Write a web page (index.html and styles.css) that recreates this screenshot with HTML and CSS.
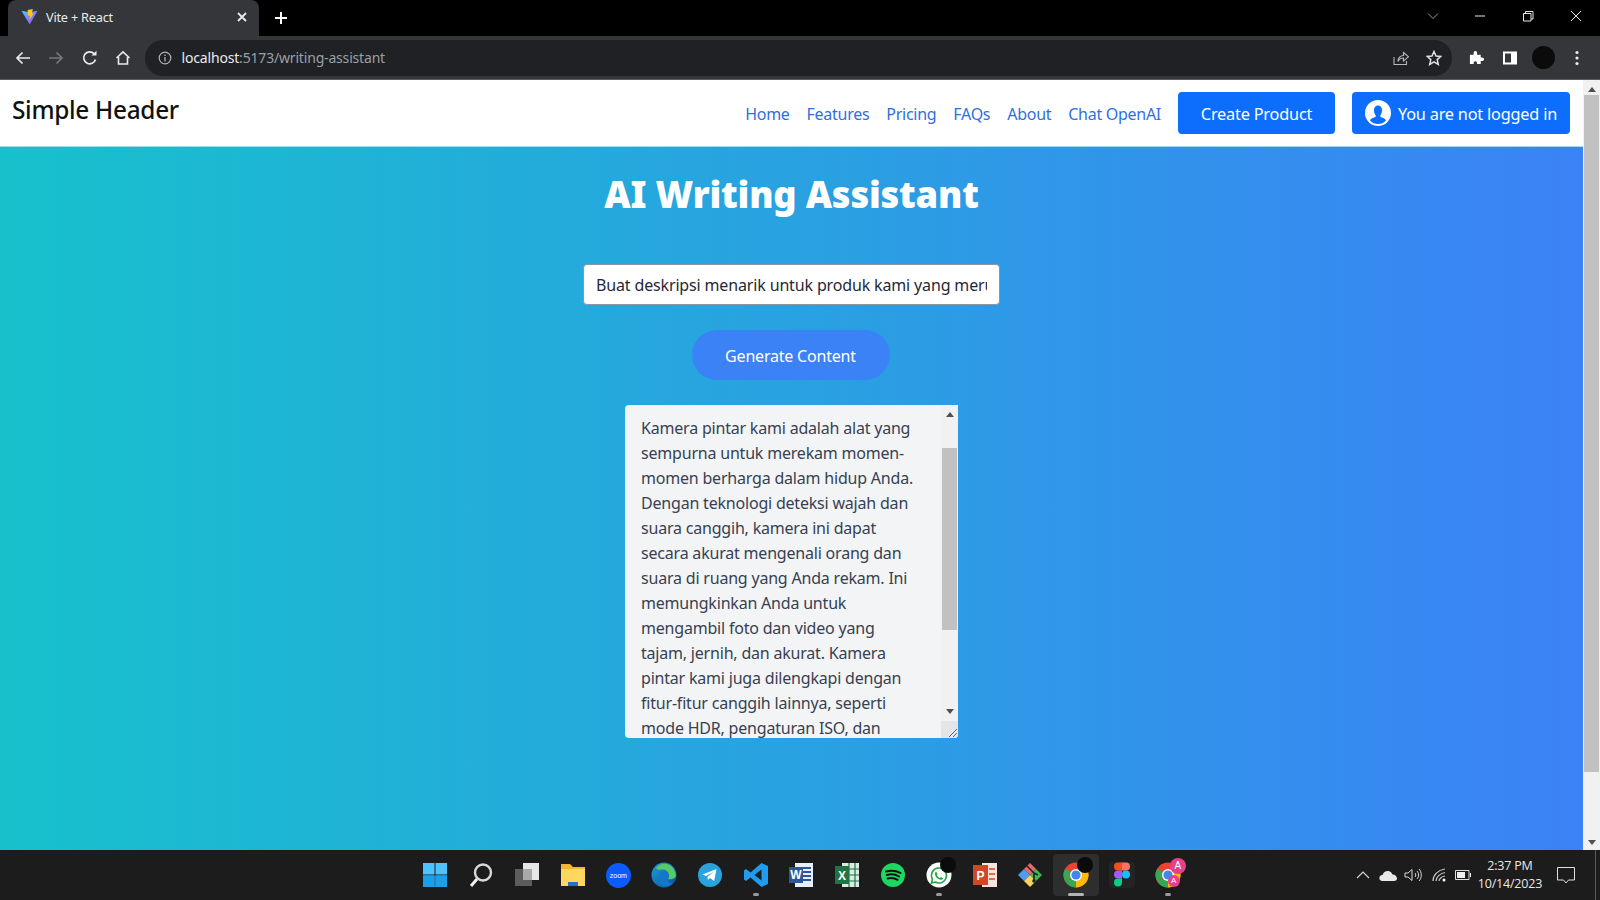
FILE: index.html
```html
<!DOCTYPE html>
<html lang="en">
<head>
<meta charset="utf-8">
<title>Vite + React</title>
<link rel="stylesheet" href="styles.css">
</head>
<body>
<div class="tabstrip">
  <div class="tab">
    <svg class="favicon" viewBox="0 0 18 18"><defs><linearGradient id="vg" x1="0" y1="0" x2="1" y2="1"><stop offset="0" stop-color="#41d1ff"/><stop offset="1" stop-color="#bd34fe"/></linearGradient></defs><path d="M0.5 2.5 L9 4 L17.5 2.5 L9.2 17 Z" fill="url(#vg)"/><path d="M12.5 0.5 L7 1.5 L7.5 8 L9.5 7.5 L9 12 L13.5 5 L11.5 5.5 Z" fill="#ffc517"/></svg>
    <span class="tab-title">Vite + React</span>
    <svg class="tab-close" viewBox="0 0 12 12"><path d="M2 2 L10 10 M10 2 L2 10" stroke="#e8eaed" stroke-width="1.8"/></svg>
  </div>
  <svg class="new-tab" viewBox="0 0 14 14"><path d="M7 1 V13 M1 7 H13" stroke="#fff" stroke-width="2"/></svg>
  <div class="win-controls">
    <svg class="win-chevron" viewBox="0 0 12 8"><path d="M1 1.5 L6 6.5 L11 1.5" fill="none" stroke="#9a9a9a" stroke-width="1"/></svg>
    <svg class="win-btn" viewBox="0 0 12 12"><path d="M1 6 H11" stroke="#e6e6e6" stroke-width="1"/></svg>
    <svg class="win-btn" viewBox="0 0 12 12"><path d="M1.5 3.5 H9 V11 H1.5 Z M3.5 3.5 V1.5 H11 V9 H9" fill="none" stroke="#e6e6e6" stroke-width="1"/></svg>
    <svg class="win-btn" viewBox="0 0 12 12"><path d="M1 1 L11 11 M11 1 L1 11" stroke="#e6e6e6" stroke-width="1"/></svg>
  </div>
</div>
<div class="toolbar">
  <svg class="tb-icon" viewBox="0 0 16 16"><path d="M15 8 H2 M7.5 2.5 L2 8 L7.5 13.5" fill="none" stroke="#e8eaed" stroke-width="1.7"/></svg>
  <svg class="tb-icon" viewBox="0 0 16 16"><path d="M1 8 H14 M8.5 2.5 L14 8 L8.5 13.5" fill="none" stroke="#75777a" stroke-width="1.7"/></svg>
  <svg class="tb-icon" viewBox="0 0 16 16"><path d="M13.5 9.5 A6 6 0 1 1 12 3.6" fill="none" stroke="#e8eaed" stroke-width="1.7"/><path d="M9.5 5.5 H14.5 V0.7 Z" fill="#e8eaed"/></svg>
  <svg class="tb-icon" viewBox="0 0 16 16"><path d="M1.5 8 L8 1.8 L14.5 8 M3.5 7 V14 H12.5 V7" fill="none" stroke="#e8eaed" stroke-width="1.6"/></svg>
  <div class="omnibox">
    <svg class="info" viewBox="0 0 14 14"><circle cx="7" cy="7" r="5.8" fill="none" stroke="#b0b2b5" stroke-width="1.2"/><path d="M7 6 V10.5 M7 3.5 V5" stroke="#b0b2b5" stroke-width="1.3"/></svg>
    <span class="url"><span class="url-host">localhost</span>:5173/writing-assistant</span>
    <svg class="omni-share" viewBox="0 0 16 16"><path d="M1 7 V14.5 H13.5 V11" fill="none" stroke="#b5b7ba" stroke-width="1.1"/><path d="M5 11.5 C5 7.5 8 5.5 10.5 5.5 V2.5 L15.5 6.8 L10.5 11 V8 C8 8 6.2 9 5 11.5 Z" fill="none" stroke="#b5b7ba" stroke-width="1.1"/></svg>
    <svg class="omni-star" viewBox="0 0 16 16"><path d="M8 1.5 L10 6 L14.8 6.4 L11.2 9.6 L12.3 14.4 L8 11.9 L3.7 14.4 L4.8 9.6 L1.2 6.4 L6 6 Z" fill="none" stroke="#e0e2e5" stroke-width="1.5"/></svg>
  </div>
  <svg class="ext" viewBox="0 0 16 16"><path d="M1 5 H5 C4.6 2 5.5 1 6.8 1 C8.1 1 9 2 8.6 5 H12.5 V8 C15 7.6 16 8.5 16 9.8 C16 11.1 15 12 12.5 11.6 V15 H8.5 C9 13 8 12 6.8 12 C5.6 12 4.6 13 5 15 H1 Z" fill="#fff"/></svg>
  <svg class="side" viewBox="0 0 16 16"><path d="M1 1.5 H15 V14.5 H1 Z" fill="#fff"/><path d="M3 3.5 H9 V12.5 H3 Z" fill="#35363a"/></svg>
  <div class="avatar"></div>
  <svg class="dots" viewBox="0 0 4 16"><circle cx="2" cy="2.5" r="1.6" fill="#e8eaed"/><circle cx="2" cy="8" r="1.6" fill="#e8eaed"/><circle cx="2" cy="13.5" r="1.6" fill="#e8eaed"/></svg>
</div>
<div class="viewport">
  <div class="page">
    <header class="site-header">
      <div class="brand">Simple Header</div>
      <nav class="nav">
        <a class="nav-link">Home</a>
        <a class="nav-link">Features</a>
        <a class="nav-link">Pricing</a>
        <a class="nav-link">FAQs</a>
        <a class="nav-link">About</a>
        <a class="nav-link">Chat OpenAI</a>
        <button class="btn btn-create">Create Product</button>
        <button class="btn btn-user">
          <svg class="user-icon" viewBox="0 0 26 26"><circle cx="13" cy="13" r="13" fill="#fff"/><path d="M13 5.5 C16 5.5 17.3 8 17 11 C16.8 13 16 14.6 15.2 15.4 C15 16.6 15.6 17 17 17.6 C19 18.4 20.6 19.2 21 20.5 C19 23 16 24 13 24 C10 24 7 23 5 20.5 C5.4 19.2 7 18.4 9 17.6 C10.4 17 11 16.6 10.8 15.4 C10 14.6 9.2 13 9 11 C8.7 8 10 5.5 13 5.5 Z" fill="#0d6efd"/></svg>
          <span class="btn-label">You are not logged in</span>
        </button>
      </nav>
    </header>
    <main class="main">
      <h1 class="title">AI Writing Assistant</h1>
      <input class="prompt" type="text" value="Buat deskripsi menarik untuk produk kami yang merupakan kamera pintar">
      <button class="generate">Generate Content</button>
      <div class="output">
        <p class="output-text">Kamera pintar kami adalah alat yang sempurna untuk merekam momen-momen berharga dalam hidup Anda. Dengan teknologi deteksi wajah dan suara canggih, kamera ini dapat secara akurat mengenali orang dan suara di ruang yang Anda rekam. Ini memungkinkan Anda untuk mengambil foto dan video yang tajam, jernih, dan akurat. Kamera pintar kami juga dilengkapi dengan fitur-fitur canggih lainnya, seperti mode HDR, pengaturan ISO, dan</p>
        <div class="output-bar">
          <span class="arrow-up"></span>
          <div class="output-track"><div class="output-thumb"></div></div>
          <span class="arrow-down"></span>
          <div class="resizer"><svg class="resizer-mark" viewBox="0 0 10 10"><path d="M1 9 L9 1 M5 9 L9 5" stroke="#666" stroke-width="1"/></svg></div>
        </div>
      </div>
    </main>
  </div>
  <div class="page-bar">
    <span class="arrow-up"></span>
    <div class="page-track"><div class="page-thumb"></div></div>
    <span class="arrow-down"></span>
  </div>
</div>
<footer class="taskbar">
  <div></div>
  <div class="task-icons">
    <div class="task-item"><svg class="ti" viewBox="0 0 26 26"><path d="M1 1 H12.5 V12.5 H1 Z M13.5 1 H25 V12.5 H13.5 Z M1 13.5 H12.5 V25 H1 Z M13.5 13.5 H25 V25 H13.5 Z" fill="#4cc2ff"/><path d="M1 13.5 H12.5 V25 H1 Z M13.5 13.5 H25 V25 H13.5 Z" fill="#1a9fe8"/></svg></div>
    <div class="task-item"><svg class="ti" viewBox="0 0 26 26"><circle cx="15" cy="10.5" r="8" fill="none" stroke="#d8d8d8" stroke-width="2.4"/><path d="M9 17 L3 24" stroke="#f0f0f0" stroke-width="3"/></svg></div>
    <div class="task-item"><svg class="ti" viewBox="0 0 26 26"><path d="M9 1 H25 V18 H9 Z" fill="#e6e6e6"/><path d="M1 7 H18 V24 H1 Z" fill="#5c5c5c"/><path d="M9 7 H18 V18 H9 Z" fill="#a8a8a8"/></svg></div>
    <div class="task-item"><svg class="ti" viewBox="0 0 26 26"><path d="M1 2 H10 L13 5 H25 V24 H1 Z" fill="#f2b632"/><path d="M1 7 H25 V24 H1 Z" fill="#ffd75e"/><path d="M8 20 H18 V24 H8 Z" fill="#1f74c9"/></svg></div>
    <div class="task-item"><div class="zoom-logo">zoom</div></div>
    <div class="task-item"><svg class="ti" viewBox="0 0 26 26"><defs><linearGradient id="eg" x1="0" y1="0" x2="1" y2="1"><stop offset="0" stop-color="#1f9fd8"/><stop offset="1" stop-color="#0b4f96"/></linearGradient></defs><circle cx="13" cy="13" r="12.5" fill="url(#eg)"/><path d="M5 6 C10 -1 23 0 25 13 C25 16 21 18 17 17 C20 12 16 7 11 7.5 C8 8 6.5 8 5 6 Z" fill="#58c96a"/><path d="M11 10 C15 9 18 12 17 16 C16 20 19 22 22 21 C18 26 8 26 7 18 C7 14 9 11 11 10 Z" fill="#1278cc"/></svg></div>
    <div class="task-item"><svg class="ti" viewBox="0 0 26 26"><circle cx="13" cy="13" r="12" fill="#2aa3dc"/><path d="M5.5 12.5 L19.5 7 L17.2 19 L13 16 L10.8 18 L10.5 14.7 L16.5 10 L9 14 Z" fill="#fff"/></svg></div>
    <div class="task-item running"><svg class="ti" viewBox="0 0 26 26"><path d="M18.5 1 L25 4 V22 L18.5 25 L7.5 15.5 L3 19 L1 17.5 V8.5 L3 7 L7.5 10.5 Z M18.5 7.5 L11.5 13 L18.5 18.5 Z" fill="#1f9cf0"/></svg></div>
    <div class="task-item"><svg class="ti" viewBox="0 0 26 26"><path d="M7 1 H25 V25 H7 Z" fill="#e8effa"/><path d="M14 6 H23 M14 10 H23 M14 14 H23 M14 18 H23" stroke="#2b579a" stroke-width="1.8"/><path d="M1 5 H15 V21 H1 Z" fill="#2b579a"/><text class="office-letter" x="8" y="17">W</text></svg></div>
    <div class="task-item"><svg class="ti" viewBox="0 0 26 26"><path d="M8 1 H25 V25 H8 Z" fill="#dcebe2"/><path d="M15 1 V25 M21 1 V25 M8 7 H25 M8 13 H25 M8 19 H25" stroke="#217346" stroke-width="1.2"/><path d="M1 4 H15 V22 H1 Z" fill="#217346"/><text class="office-letter" x="8" y="18">X</text></svg></div>
    <div class="task-item"><svg class="ti" viewBox="0 0 26 26"><circle cx="13" cy="13" r="12" fill="#1ed760"/><path d="M6 9.5 C11 8 16 8.5 20.5 11 M6.8 13 C11 11.8 15.5 12.4 19 14.5 M7.6 16.5 C11 15.6 14.5 16 17.6 17.8" fill="none" stroke="#121212" stroke-width="2" stroke-linecap="round"/></svg></div>
    <div class="task-item running"><svg class="ti" viewBox="0 0 26 26"><circle cx="13" cy="13" r="12.5" fill="#fff"/><path d="M13 6 A7.5 7.5 0 0 0 6.5 17.3 L5.5 21 L9.3 20 A7.5 7.5 0 1 0 13 6 Z" fill="none" stroke="#25a244" stroke-width="1.6"/><path d="M10 9.5 L11.5 12 L10.8 13 C11.5 14.5 12.5 15.3 14 16 L15 15 L17.2 16.2 C16.5 18 14.5 18 12.5 17 C10.5 16 9 14 9 12 C9 11 9.4 10 10 9.5 Z" fill="#25a244"/></svg><div class="blob"></div></div>
    <div class="task-item"><svg class="ti" viewBox="0 0 26 26"><path d="M10 1 H25 V25 H10 Z" fill="#f6e4de"/><path d="M17 7 H23 M17 12 H23 M17 17 H23" stroke="#d24726" stroke-width="1.6"/><path d="M1 3 H16 V23 H1 Z" fill="#d24726"/><text class="office-letter" x="8.5" y="18">P</text></svg></div>
    <div class="task-item"><svg class="ti" viewBox="0 0 26 26"><path d="M13 13 L7 7 L1 13 L7 19 Z" fill="#4f9cf0"/><path d="M13 13 L19 7 L25 13 L19 19 Z" fill="#3fb950"/><path d="M13 13 L7 19 L13 25 L19 19 Z" fill="#f4d35e"/><path d="M13 13 L7 7 L13 1 L19 7 Z" fill="#e86a6a"/><path d="M9 3 L17 11 V18 M17 11 L21 13" fill="none" stroke="#222" stroke-width="1.6"/><circle cx="17" cy="19" r="1.8" fill="#222"/></svg></div>
    <div class="task-item active"><svg class="ti" viewBox="0 0 26 26"><circle cx="13" cy="13" r="12.5" fill="#ea4335"/><path d="M13 13 L2.2 19.2 A12.5 12.5 0 0 1 2.2 6.8 Z" fill="#34a853"/><path d="M2 19 A12.5 12.5 0 0 0 13 25.5 L19 14 Z" fill="#34a853"/><path d="M13 25.5 A12.5 12.5 0 0 0 24.5 8 H13 Z" fill="#fbbc05"/><circle cx="13" cy="13" r="6" fill="#fff"/><circle cx="13" cy="13" r="4.6" fill="#4285f4"/></svg><div class="blob"></div></div>
    <div class="task-item"><div class="figma-tile"><svg class="ti-figma" viewBox="0 0 18 26"><path d="M1 4.5 A4 4 0 0 1 5 0.5 H9 V8.5 H5 A4 4 0 0 1 1 4.5 Z" fill="#f24e1e"/><path d="M9 0.5 H13 A4 4 0 0 1 13 8.5 H9 Z" fill="#ff7262"/><path d="M1 12.5 A4 4 0 0 1 5 8.5 H9 V16.5 H5 A4 4 0 0 1 1 12.5 Z" fill="#a259ff"/><circle cx="13" cy="12.5" r="4" fill="#1abcfe"/><path d="M1 20.5 A4 4 0 0 1 5 16.5 H9 V20.5 A4 4 0 0 1 1 20.5 Z" fill="#0acf83"/></svg></div></div>
    <div class="task-item running"><svg class="ti" viewBox="0 0 26 26"><circle cx="13" cy="13" r="12.5" fill="#ea4335"/><path d="M13 13 L2.2 19.2 A12.5 12.5 0 0 1 2.2 6.8 Z" fill="#34a853"/><path d="M2 19 A12.5 12.5 0 0 0 13 25.5 L19 14 Z" fill="#34a853"/><path d="M13 25.5 A12.5 12.5 0 0 0 24.5 8 H13 Z" fill="#fbbc05"/><circle cx="13" cy="13" r="6" fill="#fff"/><circle cx="13" cy="13" r="4.6" fill="#4285f4"/></svg><div class="badge-a">A</div><div class="badge-b">A</div></div>
  </div>
  <div class="tray">
    <svg class="tray-chevron" viewBox="0 0 14 8"><path d="M1 7 L7 1 L13 7" fill="none" stroke="#d8d8d8" stroke-width="1.1"/></svg>
    <svg class="tray-cloud" viewBox="0 0 18 11"><path d="M4 11 C1 11 0 9 0.5 7 C1 5.5 2.5 5 3.5 5 C4.5 2 7 0.5 9.5 1 C11.5 1.4 13 3 13.5 4.6 C16 4.6 18 6.5 18 8.5 C18 10 17 11 15 11 Z" fill="#e8e8e8"/></svg>
    <svg class="tray-vol" viewBox="0 0 18 14"><path d="M1 5 H4 L8 1.5 V12.5 L4 9 H1 Z M11 5 C12 6 12 8 11 9 M13 3 C15 5 15 9 13 11 M15 1 C18 4 18 10 15 13" fill="none" stroke="#d8d8d8" stroke-width="1"/></svg>
    <svg class="tray-wifi" viewBox="0 0 14 14"><path d="M1 13 C1 7 6 2 13 1 M4 13 C4 9 8 5.5 13 4.5 M7 13 C7 11 9.5 8.5 13 8" fill="none" stroke="#c8c8c8" stroke-width="1.2"/><circle cx="12" cy="12" r="1.5" fill="#fff"/></svg>
    <svg class="tray-batt" viewBox="0 0 16 10"><path d="M0.5 0.5 H14 V9.5 H0.5 Z" fill="none" stroke="#e0e0e0"/><path d="M2 2 H10 V8 H2 Z M15 3 H16 V7 H15 Z" fill="#f0f0f0"/></svg>
    <div class="clock"><span>2:37 PM</span><span>10/14/2023</span></div>
    <svg class="tray-notif" viewBox="0 0 18 17"><path d="M0.5 0.5 H17.5 V13 H11.5 L9 16 L6.5 13 H0.5 Z" fill="none" stroke="#e0e0e0"/></svg>
    <div class="show-desktop"></div>
  </div>
</footer>
</body>
</html>
```

FILE: styles.css
```css
* { box-sizing: border-box; }
html, body { margin: 0; height: 900px; overflow: hidden; }
body {
  display: flex;
  flex-direction: column;
  width: 1600px;
  font-family: "Noto Sans", "Open Sans", "Liberation Sans", sans-serif;
  background: #000;
}

/* browser chrome */
.tabstrip { height: 36px; flex: none; background: #000; display: flex; align-items: flex-start; padding-left: 8px; }
.tab {
  width: 251px; height: 36px; background: #35363a; border-radius: 8px 8px 0 0;
  display: flex; align-items: center; padding: 0 11px 2px 13px;
}
.favicon { width: 17px; height: 18px; margin-right: 8px; }
.tab-title { flex: 1; color: #e8eaed; font-size: 12.7px; letter-spacing: -0.2px; }
.tab-close { width: 12px; height: 12px; }
.new-tab { width: 14px; height: 14px; margin: 11px 0 0 15px; }
.win-controls { margin-left: auto; display: flex; align-items: center; height: 32px; }
.win-chevron { width: 12px; height: 8px; margin-right: 35px; }
.win-btn { width: 12px; height: 12px; margin-right: 36px; }
.win-btn:last-child { margin-right: 18px; }

.toolbar {
  height: 44px; flex: none; background: #35363a; border-bottom: 1px solid #5a5b5e;
  display: flex; align-items: center; padding: 0 0 0 15px;
}
.tb-icon { width: 16px; height: 16px; margin-right: 17.4px; }
.omnibox {
  height: 36px; width: 1307px; margin-left: -4px; background: #202124; border-radius: 18px;
  display: flex; align-items: center; padding: 0 7px 0 13px;
}
.info { width: 14px; height: 14px; margin-right: 10px; }
.url { flex: 1; color: #9aa0a6; font-size: 14px; letter-spacing: -0.18px; }
.url-host { color: #e8eaed; }
.omni-share { width: 16px; height: 16px; margin-right: 17px; }
.omni-star { width: 16px; height: 16px; margin-right: 3px; }
.ext { width: 15px; height: 15px; margin-left: 17px; }
.side { width: 16px; height: 16px; margin-left: 18px; }
.avatar { width: 23px; height: 23px; border-radius: 50%; background: #0b0b0c; margin-left: 14px; }
.dots { width: 4px; height: 16px; margin-left: 20px; }

/* page */
.viewport { height: 770px; flex: none; display: flex; background: #fff; }
.page { flex: 1; display: flex; flex-direction: column; min-width: 0; }
.site-header {
  height: 67px; flex: none; background: #fff; display: flex; justify-content: space-between;
  padding: 0 13px 0 12px; border-bottom: 1px solid #9fdbe8;
}
.brand { font-size: 24.4px; font-weight: 500; color: #111; letter-spacing: -0.3px; margin-top: 13px; line-height: 33px; }
.nav { display: flex; align-items: center; height: 66px; }
.nav-link { color: #2f6fdf; font-size: 16px; margin-right: 17px; letter-spacing: -0.28px; padding-top: 2px; }
.btn {
  height: 42px; border: 0; border-radius: 4px; background: #0d6efd; color: #fff;
  font-family: inherit; font-size: 16.3px; letter-spacing: -0.2px; display: flex; align-items: center; justify-content: center; padding: 2px 0 0;
}
.btn-create { width: 157px; margin-right: 17px; }
.btn-user { width: 218px; gap: 7px; padding-top: 0; }
.btn-label { padding-top: 2px; }
.user-icon { width: 26px; height: 26px; }

.main {
  flex: 1; background: linear-gradient(to right, #17c1cc, #3b82f6);
  display: flex; flex-direction: column; align-items: center;
}
.title { margin: 24px 0 0; color: #fff; font-size: 36.3px; font-weight: 900; line-height: 46px; letter-spacing: -0.2px; }
.prompt {
  width: 417px; height: 41px; margin-top: 47px; padding: 0 12px; border: 1px solid #8b95a3; border-radius: 4px;
  background: #fff; color: #1f2937; font-family: inherit; font-size: 16px; letter-spacing: -0.15px;
}
.generate {
  width: 198px; height: 50px; margin: 25px 2px 0 0; border: 0; border-radius: 25px; background: #3b82f6; color: #fff;
  font-family: inherit; font-size: 16px; letter-spacing: -0.2px; padding-top: 2px;
}
.output {
  width: 333px; height: 333px; margin-top: 25px; background: #f3f4f6; border-radius: 4px 0 4px 4px;
  display: flex; overflow: hidden; color: #374151;
}
.output-text { flex: 1; margin: 0; padding: 11px 22px 0 16px; font-size: 16px; line-height: 25px; letter-spacing: -0.2px; height: 333px; overflow: hidden; }
.output-bar { width: 17px; flex: none; background: #f1f1f1; display: flex; flex-direction: column; align-items: center; }
.output-track { flex: 1; width: 100%; padding-top: 31px; }
.output-thumb { height: 182px; width: 15px; margin-left: 1px; background: #c1c1c1; }
.resizer { width: 17px; height: 17px; background: #e4e5e7; margin-top: 2px; display: flex; align-items: flex-end; justify-content: flex-end; }
.resizer-mark { width: 10px; height: 10px; }
.arrow-up { width: 0; height: 0; border: 4.5px solid transparent; border-top: 0; border-bottom: 5px solid #505050; margin-top: 7px; flex: none; }
.arrow-down { width: 0; height: 0; border: 4.5px solid transparent; border-bottom: 0; border-top: 5px solid #505050; margin: 0 0 5px; flex: none; }

.page-bar { width: 17px; flex: none; background: #f1f1f1; display: flex; flex-direction: column; align-items: center; }
.page-track { flex: 1; width: 100%; padding-top: 3px; }
.page-thumb { height: 677px; width: 15px; margin-left: 1px; background: #c1c1c1; }

/* taskbar */
.taskbar {
  height: 50px; flex: none; background: #1c1c1c; display: grid; grid-template-columns: 1fr auto 1fr; align-items: center; padding-left: 3px;
}
.task-icons { display: flex; }
.task-item { width: 45.8px; height: 42px; position: relative; display: flex; align-items: center; justify-content: center; border-radius: 4px; }
.ti { width: 26px; height: 26px; }
.ti-figma { width: 18px; height: 26px; }
.figma-tile { width: 26px; height: 26px; border-radius: 4px; background: #242424; display: flex; align-items: center; justify-content: center; }
.running::after, .active::after {
  content: ""; position: absolute; left: 50%; bottom: 0; width: 6px; height: 3px; margin-left: -3px; border-radius: 2px; background: #9a9a9a;
}
.active { background: #2e2e2e; }
.active::after { width: 16px; margin-left: -8px; background: #b5b5b5; }
.zoom-logo {
  width: 25px; height: 25px; border-radius: 50%; background: #0b5cff; color: #fff; font-size: 7px; line-height: 25px; text-align: center; font-family: "Liberation Sans", sans-serif;
}
.blob { position: absolute; top: 3px; right: 6px; width: 16px; height: 16px; border-radius: 50%; background: #0b0b0b; }
.badge-a, .badge-b {
  position: absolute; border-radius: 50%; background: #e83e8c; color: #fff; text-align: center; font-family: "Liberation Sans", sans-serif;
}
.badge-a { top: 4px; right: 5px; width: 16px; height: 16px; font-size: 10px; line-height: 16px; }
.badge-b { bottom: 9px; right: 11px; width: 12px; height: 12px; font-size: 8px; line-height: 12px; }
.office-letter { fill: #fff; font-size: 12px; font-weight: 700; text-anchor: middle; font-family: "Liberation Sans", sans-serif; }
.tray { display: flex; align-items: center; justify-content: flex-end; padding-right: 4px; color: #e8e8e8; height: 50px; }
.tray-chevron { width: 14px; height: 8px; margin-right: 9px; }
.tray-cloud { width: 18px; height: 11px; margin-right: 7px; }
.tray-vol { width: 18px; height: 14px; margin-right: 10px; }
.tray-wifi { width: 14px; height: 14px; margin-right: 9px; }
.tray-batt { width: 16px; height: 10px; margin-right: 6px; }
.clock { display: flex; flex-direction: column; align-items: center; font-size: 12.5px; line-height: 18px; letter-spacing: -0.2px; margin-right: 14px; width: 66px; font-family: "Open Sans", sans-serif; }
.tray-notif { width: 18px; height: 17px; margin-right: 20px; }
.show-desktop { width: 1px; height: 50px; background: #5a5a5a; }
```
